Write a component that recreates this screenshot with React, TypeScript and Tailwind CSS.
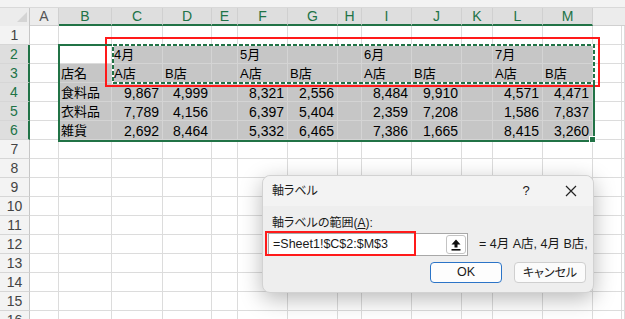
import React from 'react';

const GREEN = '#217346';

const letters = ['A', 'B', 'C', 'D', 'E', 'F', 'G', 'H', 'I', 'J', 'K', 'L', 'M'];

// rows 2..6, columns A..M
const sheet: Record<number, string[]> = {
  2: ['', '', '4月', '', '', '5月', '', '', '6月', '', '', '7月', ''],
  3: ['', '店名', 'A店', 'B店', '', 'A店', 'B店', '', 'A店', 'B店', '', 'A店', 'B店'],
  4: ['', '食料品', '9,867', '4,999', '', '8,321', '2,556', '', '8,484', '9,910', '', '4,571', '4,471'],
  5: ['', '衣料品', '7,789', '4,156', '', '6,397', '5,404', '', '2,359', '7,208', '', '1,586', '7,837'],
  6: ['', '雑貨', '2,692', '8,464', '', '5,332', '6,465', '', '7,386', '1,665', '', '8,415', '3,260'],
};

const rows = Array.from({ length: 16 }, (_, i) => i + 1);

const isShaded = (r: number, c: number) =>
  (r === 2 && c >= 2 && c <= 12) || (r >= 3 && r <= 6 && c >= 1 && c <= 12);

const DataCell: React.FC<{ r: number; c: number }> = ({ r, c }) => {
  const v = c <= 12 ? sheet[r]?.[c] ?? '' : '';
  const numeric = /^[\d,]+$/.test(v);
  const shaded = c <= 12 && isShaded(r, c);
  return (
    <div
      className={`flex items-center border-r border-b whitespace-nowrap leading-none pt-[1px] ${
        shaded ? 'bg-[#c6c6c6] border-[#d4d4d4]' : 'bg-white border-[#dcdcdc]'
      } ${numeric ? 'justify-end pr-[3px] text-[14px]' : 'pl-[2px] text-[13px]'}`}
    >
      {v}
    </div>
  );
};

const UploadArrow = () => (
  <svg width="10" height="12" viewBox="0 0 10 12">
    <polygon points="5,0.5 9.5,5.5 6.5,5.5 6.5,8.5 3.5,8.5 3.5,5.5 0.5,5.5" fill="#111" />
    <rect x="0.5" y="10" width="9" height="1.6" fill="#111" />
  </svg>
);

const App: React.FC = () => {
  return (
    <div className="relative w-[625px] h-[319px] overflow-hidden bg-white text-black font-['Liberation_Sans','Noto_Sans_CJK_JP',sans-serif]">
      {/* ribbon edge */}
      <div className="h-[8px] bg-[#f3f3f3] border-b border-[#d9d9d9]" />

      {/* Sheet grid */}
      <div className="grid grid-cols-[30px_29px_53px_51px_49px_26px_50px_50px_24px_50px_50px_31px_50px_50px_29px_1fr] grid-rows-[18px_repeat(16,19px)]">
        {/* corner */}
        <div className="relative bg-[#ececec] border-r border-[#c6c6c6]">
          <svg className="absolute left-[17px] top-[4px]" width="10" height="10" viewBox="0 0 10 10">
            <polygon points="10,0 10,10 0,10" fill="#d4d4d4" />
          </svg>
        </div>
        {letters.map((l, i) => {
          const sel = i >= 1;
          return (
            <div
              key={l}
              className={`flex items-center justify-center text-[14px] border-r border-[#d0d0d0] ${
                sel ? 'bg-[#dedede] border-b-2 border-b-[#217346] text-[#217346]' : 'bg-[#ececec] border-b border-b-[#d0d0d0] text-[#555]'
              }`}
            >
              {l}
            </div>
          );
        })}
        <div className="bg-[#ececec] border-b border-[#d0d0d0]" />
        <div className="bg-[#ececec] border-b border-[#d0d0d0]" />

        {rows.map((r) => {
          const sel = r >= 2 && r <= 6;
          return (
            <React.Fragment key={r}>
              <div
                className={`flex items-center justify-center text-[14px] border-b border-[#d6d6d6] ${
                  sel
                    ? 'bg-[#dedede] border-r-2 border-r-[#217346] text-[#217346]'
                    : 'bg-[#f3f3f3] border-r border-r-[#c6c6c6] text-[#444]'
                }`}
              >
                {r}
              </div>
              {Array.from({ length: 15 }, (_, c) => (
                <DataCell key={c} r={r} c={c} />
              ))}
            </React.Fragment>
          );
        })}
      </div>

      {/* red highlight around C2:M3 */}
      <div className="absolute left-[105px] top-[37px] w-[495px] h-[50px] border-2 border-[#ff1a1a]" />

      {/* selection B2:M6 */}
      <div className="absolute left-[58px] top-[44px] w-[537px] h-[98px] border-2" style={{ borderColor: GREEN }} />

      {/* marching ants C2:M3 */}
      <svg className="absolute left-[112px] top-[44px]" width="483" height="40" viewBox="0 0 483 40">
        <rect x="1" y="1" width="481" height="38" fill="none" stroke="#fff" strokeWidth="2" />
        <rect x="1" y="1" width="481" height="38" fill="none" stroke={GREEN} strokeWidth="2" strokeDasharray="4 2" />
      </svg>

      {/* fill handle */}
      <div className="absolute left-[589px] top-[136px] w-[7px] h-[7px] bg-[#217346] border border-white" />

      {/* dialog */}
      <div className="absolute left-[262px] top-[175px] w-[332px] h-[118px] rounded-[8px] bg-[#eeeeee] border border-[#d2d2d2] shadow-[0_6px_22px_rgba(0,0,0,0.28)] text-[#1a1a1a]">
        <div className="flex items-center h-[30px] pl-[9px] pr-[16px] rounded-t-[8px] bg-[#f3f3f3]">
          <span className="text-[12px] [font-feature-settings:'palt']">軸ラベル</span>
          <span className="ml-auto w-[12px] text-center text-[13px]">?</span>
          <span className="ml-[33px] w-[12px] flex justify-center">
            <svg width="12" height="12" viewBox="0 0 12 12">
              <path d="M1 1 L11 11 M11 1 L1 11" stroke="#222" strokeWidth="1.2" />
            </svg>
          </span>
        </div>

        <div className="px-[5px]">
          <div className="mt-[9px] pl-[4px] text-[12px] leading-[16px] [font-feature-settings:'palt']">
            軸ラベルの範囲(<span className="underline">A</span>):
          </div>

          <div className="mt-[2px] flex items-center">
            <div className="flex items-center w-[200px] h-[23px] bg-white border border-[#a8a8a8]">
              <span className="pl-[4px] text-[12.5px]">=Sheet1!$C$2:$M$3</span>
              <span className="ml-auto mr-[1px] w-[20px] h-[19px] flex items-center justify-center bg-white border border-[#c4c4c4] rounded-[3px]">
                <UploadArrow />
              </span>
            </div>
            <span className="ml-[11px] text-[12.5px] whitespace-nowrap">= 4月 A店, 4月 B店,</span>
          </div>

          <div className="mt-[6px] pr-[2px] flex justify-end gap-[12px]">
            <button className="w-[72px] h-[21px] rounded-[4px] border border-[#2b74c7] bg-[#fdfdfd] text-[12.5px] leading-none">
              OK
            </button>
            <button className="w-[72px] h-[21px] rounded-[4px] border border-[#cfcfcf] bg-[#fbfbfb] text-[12px] leading-none [font-feature-settings:'palt']">
              キャンセル
            </button>
          </div>
        </div>

        {/* red highlight on the range box */}
        <div className="absolute left-[2px] top-[55px] w-[151px] h-[25px] border-2 border-[#ff1a1a]" />
      </div>
    </div>
  );
};

export default App;
